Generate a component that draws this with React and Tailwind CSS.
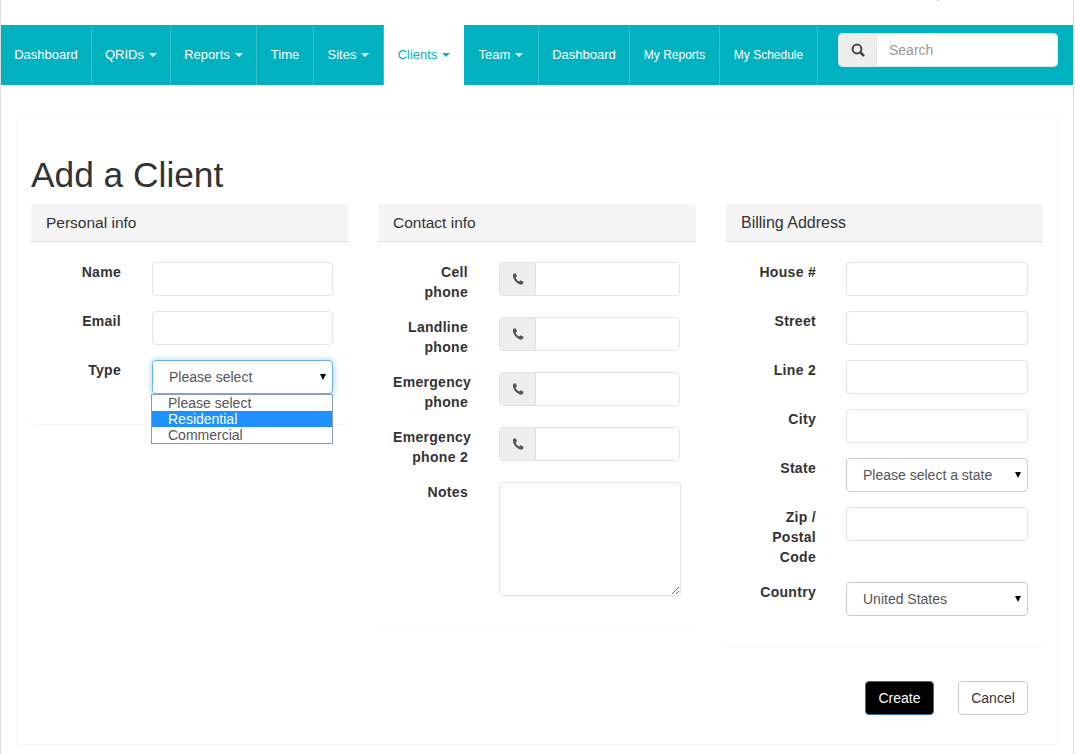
const navItems = [
  { label: 'Dashboard', width: 'w-[91px]' },
  { label: 'QRIDs', width: 'w-[79px]', caret: true },
  { label: 'Reports', width: 'w-[86px]', caret: true },
  { label: 'Time', width: 'w-[57px]' },
  { label: 'Sites', width: 'w-[70px]', caret: true },
  { label: 'Clients', width: 'w-[80px]', caret: true, active: true },
  { label: 'Team', width: 'w-[75px]', caret: true },
  { label: 'Dashboard', width: 'w-[91px]' },
  { label: 'My Reports', width: 'w-[90px]', small: true },
  { label: 'My Schedule', width: 'w-[98px]', small: true },
];

const contactRows = [
  ['Cell', 'phone'],
  ['Landline', 'phone'],
  ['Emergency', 'phone'],
  ['Emergency', 'phone 2'],
];

const PhoneIcon = () => (
  <svg width="12" height="12" viewBox="0 0 12 12" fill="#555">
    <path d="M1.5 .8 3.8.2 5 3.5 3.6 4.6C4.2 6.6 5.4 7.8 7.2 8.5L8.5 7.2 11.5 8.8 11 10.8C10.8 11.4 9.5 11.8 8 11.4 4.5 10.4 1.8 7.5 1 3.8.8 2.6 1 1.4 1.5.8Z" />
  </svg>
);

const SearchIcon = () => (
  <svg width="14" height="14" viewBox="0 0 14 14" fill="none" stroke="#444">
    <circle cx="6" cy="6" r="4.4" strokeWidth="2" />
    <path d="M9.2 9.2 13 13" strokeWidth="2.6" />
  </svg>
);

const Caret = ({ color }) => (
  <span className={`ml-[5px] inline-block h-0 w-0 border-x-4 border-t-4 border-x-transparent align-middle ${color}`} />
);

const Nav = () => (
  <div className="flex h-[60px] bg-[#00b2bf]">
    {navItems.map((item, i) => (
      <a
        key={i}
        className={`flex items-center justify-center ${item.width} ${item.small ? 'text-[12px]' : 'text-[13px]'} ${
          item.active ? 'bg-white text-[#00b2bf]' : 'border-r border-[#33c1cb] text-white'
        }`}
      >
        {item.label}
        {item.caret && <Caret color={item.active ? 'border-t-[#00b2bf]' : 'border-t-white'} />}
      </a>
    ))}
    <div className="ml-5 mt-2 flex h-[34px] w-[220px] overflow-hidden rounded border border-[#e4e4e8]">
      <span className="flex w-[38px] items-center justify-center border-r border-[#e4e4e8] bg-[#eee]">
        <SearchIcon />
      </span>
      <input
        placeholder="Search"
        className="min-w-0 flex-1 bg-white px-3 text-sm text-[#555] outline-none placeholder:text-[#999]"
      />
    </div>
  </div>
);

const Row = ({ label, gap = 'gap-x-[31px]', children }) => (
  <div className={`grid grid-cols-[75px_1fr] ${gap}`}>
    <label className="text-right text-sm/5 font-bold tracking-[0.3px] text-[#333]">{label}</label>
    {children}
  </div>
);

const TextInput = () => (
  <input className="h-[34px] w-full rounded border border-[#e4e4e8] bg-white px-3 text-sm outline-none" />
);

const PhoneInput = () => (
  <div className="flex h-[34px] w-[181px] overflow-hidden rounded border border-[#e4e4e8]">
    <span className="flex w-9 items-center justify-center border-r border-[#e4e4e8] bg-[#eee]">
      <PhoneIcon />
    </span>
    <input className="min-w-0 flex-1 bg-white px-3 text-sm outline-none" />
  </div>
);

const SelectInput = ({ value, focused, children }) => (
  <div className="relative h-[34px]">
    <select
      defaultValue={value}
      className={`h-full w-full appearance-none rounded border bg-white pl-4 text-sm text-[#555] outline-none ${
        focused
          ? 'border-[#66afe9] shadow-[0_0_6px_rgba(102,175,233,0.6)]'
          : 'border-[#ccc]'
      }`}
    >
      <option>{value}</option>
    </select>
    <span className="pointer-events-none absolute right-[7px] top-[14px] h-0 w-0 border-x-[3.5px] border-t-[6px] border-x-transparent border-t-black" />
    {children}
  </div>
);

const Panel = ({ title, titleSize = 'text-[15.5px]/[37px]', children }) => (
  <div className="rounded shadow-[0_1px_1px_rgba(0,0,0,0.04)]">
    <div className={`h-[38px] rounded-t border-b border-[#ddd] bg-[#f5f5f5] px-[15px] text-[#333] ${titleSize}`}>
      {title}
    </div>
    <div className="flex flex-col gap-[15px] px-[15px] pb-[30px] pt-5">{children}</div>
  </div>
);

const billingGap = 'gap-x-[30px]';

export default function App() {
  return (
    <div className="relative h-[754px] w-[1074px] overflow-hidden border-x border-[#ddd] bg-white pt-[25px] font-['Liberation_Sans',Arial,sans-serif]">
      {/* cut off bit of the header link above the nav */}
      <span className="absolute left-[936px] top-0 h-px w-[2px] bg-[#9fd8ff]" />
      <Nav />
      <div className="mx-[15px] mt-[30px] rounded border border-[#fbfbfb] border-b-[#f5f5f5] px-[14px] pb-[29px] pt-[39px]">
        <h1 className="mb-[9px] text-[35.3px]/10 font-normal text-[#333]">Add a Client</h1>
        <div className="grid grid-cols-[317px_318px_317px] items-start gap-x-[30px]">
          <Panel title="Personal info">
            <Row label="Name"><TextInput /></Row>
            <Row label="Email"><TextInput /></Row>
            <Row label="Type">
              <SelectInput value="Please select" focused>
                <ul className="absolute left-[-1px] right-0 top-[34px] z-10 border border-[#7f9db9] bg-white text-sm/4 text-[#555]">
                  <li className="pl-4">Please select</li>
                  <li className="bg-[#1e90ff] pl-4 text-white">Residential</li>
                  <li className="pl-4">Commercial</li>
                </ul>
              </SelectInput>
            </Row>
          </Panel>
          <Panel title="Contact info">
            {contactRows.map(([first, second], i) => (
              <Row key={i} label={<>{first}<br />{second}</>}><PhoneInput /></Row>
            ))}
            <Row label="Notes">
              <textarea className="h-[114px] w-[182px] rounded border border-[#e4e4e8] bg-white outline-none" />
            </Row>
          </Panel>
          <Panel title="Billing Address" titleSize="text-base/[37px]">
            <Row gap={billingGap} label="House #"><TextInput /></Row>
            <Row gap={billingGap} label="Street"><TextInput /></Row>
            <Row gap={billingGap} label="Line 2"><TextInput /></Row>
            <Row gap={billingGap} label="City"><TextInput /></Row>
            <Row gap={billingGap} label="State"><SelectInput value="Please select a state" /></Row>
            <Row gap={billingGap} label="Zip / Postal Code"><TextInput /></Row>
            <Row gap={billingGap} label="Country"><SelectInput value="United States" /></Row>
          </Panel>
        </div>
        <div className="mr-[15px] mt-[35px] flex justify-end gap-6">
          <button className="h-[34px] w-[69px] rounded border border-[#2e6da4] bg-black text-sm text-white">Create</button>
          <button className="h-[34px] w-[70px] rounded border border-[#ccc] bg-white text-sm text-[#333]">Cancel</button>
        </div>
      </div>
    </div>
  );
}
